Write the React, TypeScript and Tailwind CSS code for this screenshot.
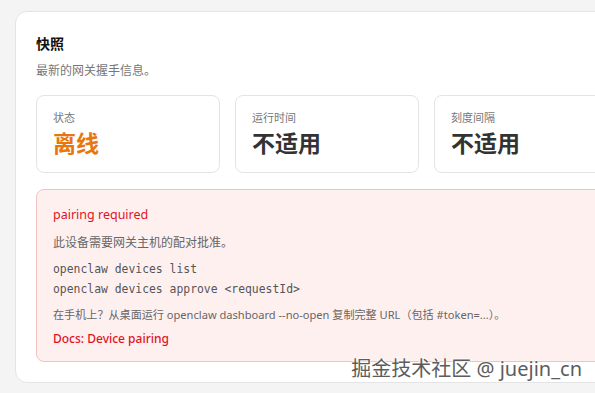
import React from 'react';

const SANS = 'font-["Segoe_UI","Noto_Sans","Noto_Sans_CJK_SC",sans-serif]';

const STATS = [
  { label: '状态', value: '离线', tone: 'text-[#e8760e]' },
  { label: '运行时间', value: '不适用', tone: 'text-[#333333]' },
  { label: '刻度间隔', value: '不适用', tone: 'text-[#333333]' },
];

export default function App() {
  return (
    <div className={`relative h-[393px] w-[595px] overflow-hidden bg-[#f4f4f4] ${SANS}`}>
      <div className="ml-[15px] mt-[11px] w-[640px] rounded-[12px] border border-[#e4e4e4] bg-white px-[20px] pb-[20px] pt-[21px]">
        <h2 className="text-[14px] font-bold leading-[22px] text-[#111111]">快照</h2>
        <p className="mt-[7px] text-[12px] leading-[18px] text-[#777777]">最新的网关握手信息。</p>

        <div className="mt-[15px] grid grid-cols-[184px_184px_184px] gap-[15px]">
          {STATS.map((s) => (
            <div
              key={s.label}
              className="h-[78px] rounded-[8px] border border-[#e4e4e4] bg-white px-[16px] pt-[14px]"
            >
              <div className="text-[11px] leading-[16px] text-[#777777]">{s.label}</div>
              <div className={`mt-[2px] text-[23px] font-bold leading-[30px] ${s.tone}`}>{s.value}</div>
            </div>
          ))}
        </div>

        <div className="mt-[16px] h-[173px] rounded-[8px] border border-[#f2c2c2] bg-[#fff0f0] px-[16px] pt-[16px]">
          <div className="text-[12.5px] leading-[18px] text-[#e0141e]">pairing required</div>
          <div className="mt-[10px] text-[12px] leading-[18px] text-[#666666]">
            此设备需要网关主机的配对批准。
          </div>
          <div className='mt-[7px] font-["DejaVu_Sans_Mono",monospace] text-[11.4px] leading-[20px] text-[#555555]'>
            <div>openclaw devices list</div>
            <div>openclaw devices approve &lt;requestId&gt;</div>
          </div>
          <div className="mt-[7px] text-[11.1px] leading-[18px] text-[#666666]">
            在手机上？从桌面运行 openclaw dashboard --no-open 复制完整 URL（包括 #token=...）。
          </div>
          <div className="mt-[6px] text-[12px] font-medium leading-[18px] text-[#e0141e]">
            Docs: Device pairing
          </div>
        </div>
      </div>

      <div className="pointer-events-none absolute right-[13px] top-[355px] text-[20px] leading-[28px] text-[#5c5c5c] [text-shadow:0_0_2px_#fff,0_0_2px_#fff,0_0_2px_#fff]">
        掘金技术社区 @ juejin_cn
      </div>
    </div>
  );
}
